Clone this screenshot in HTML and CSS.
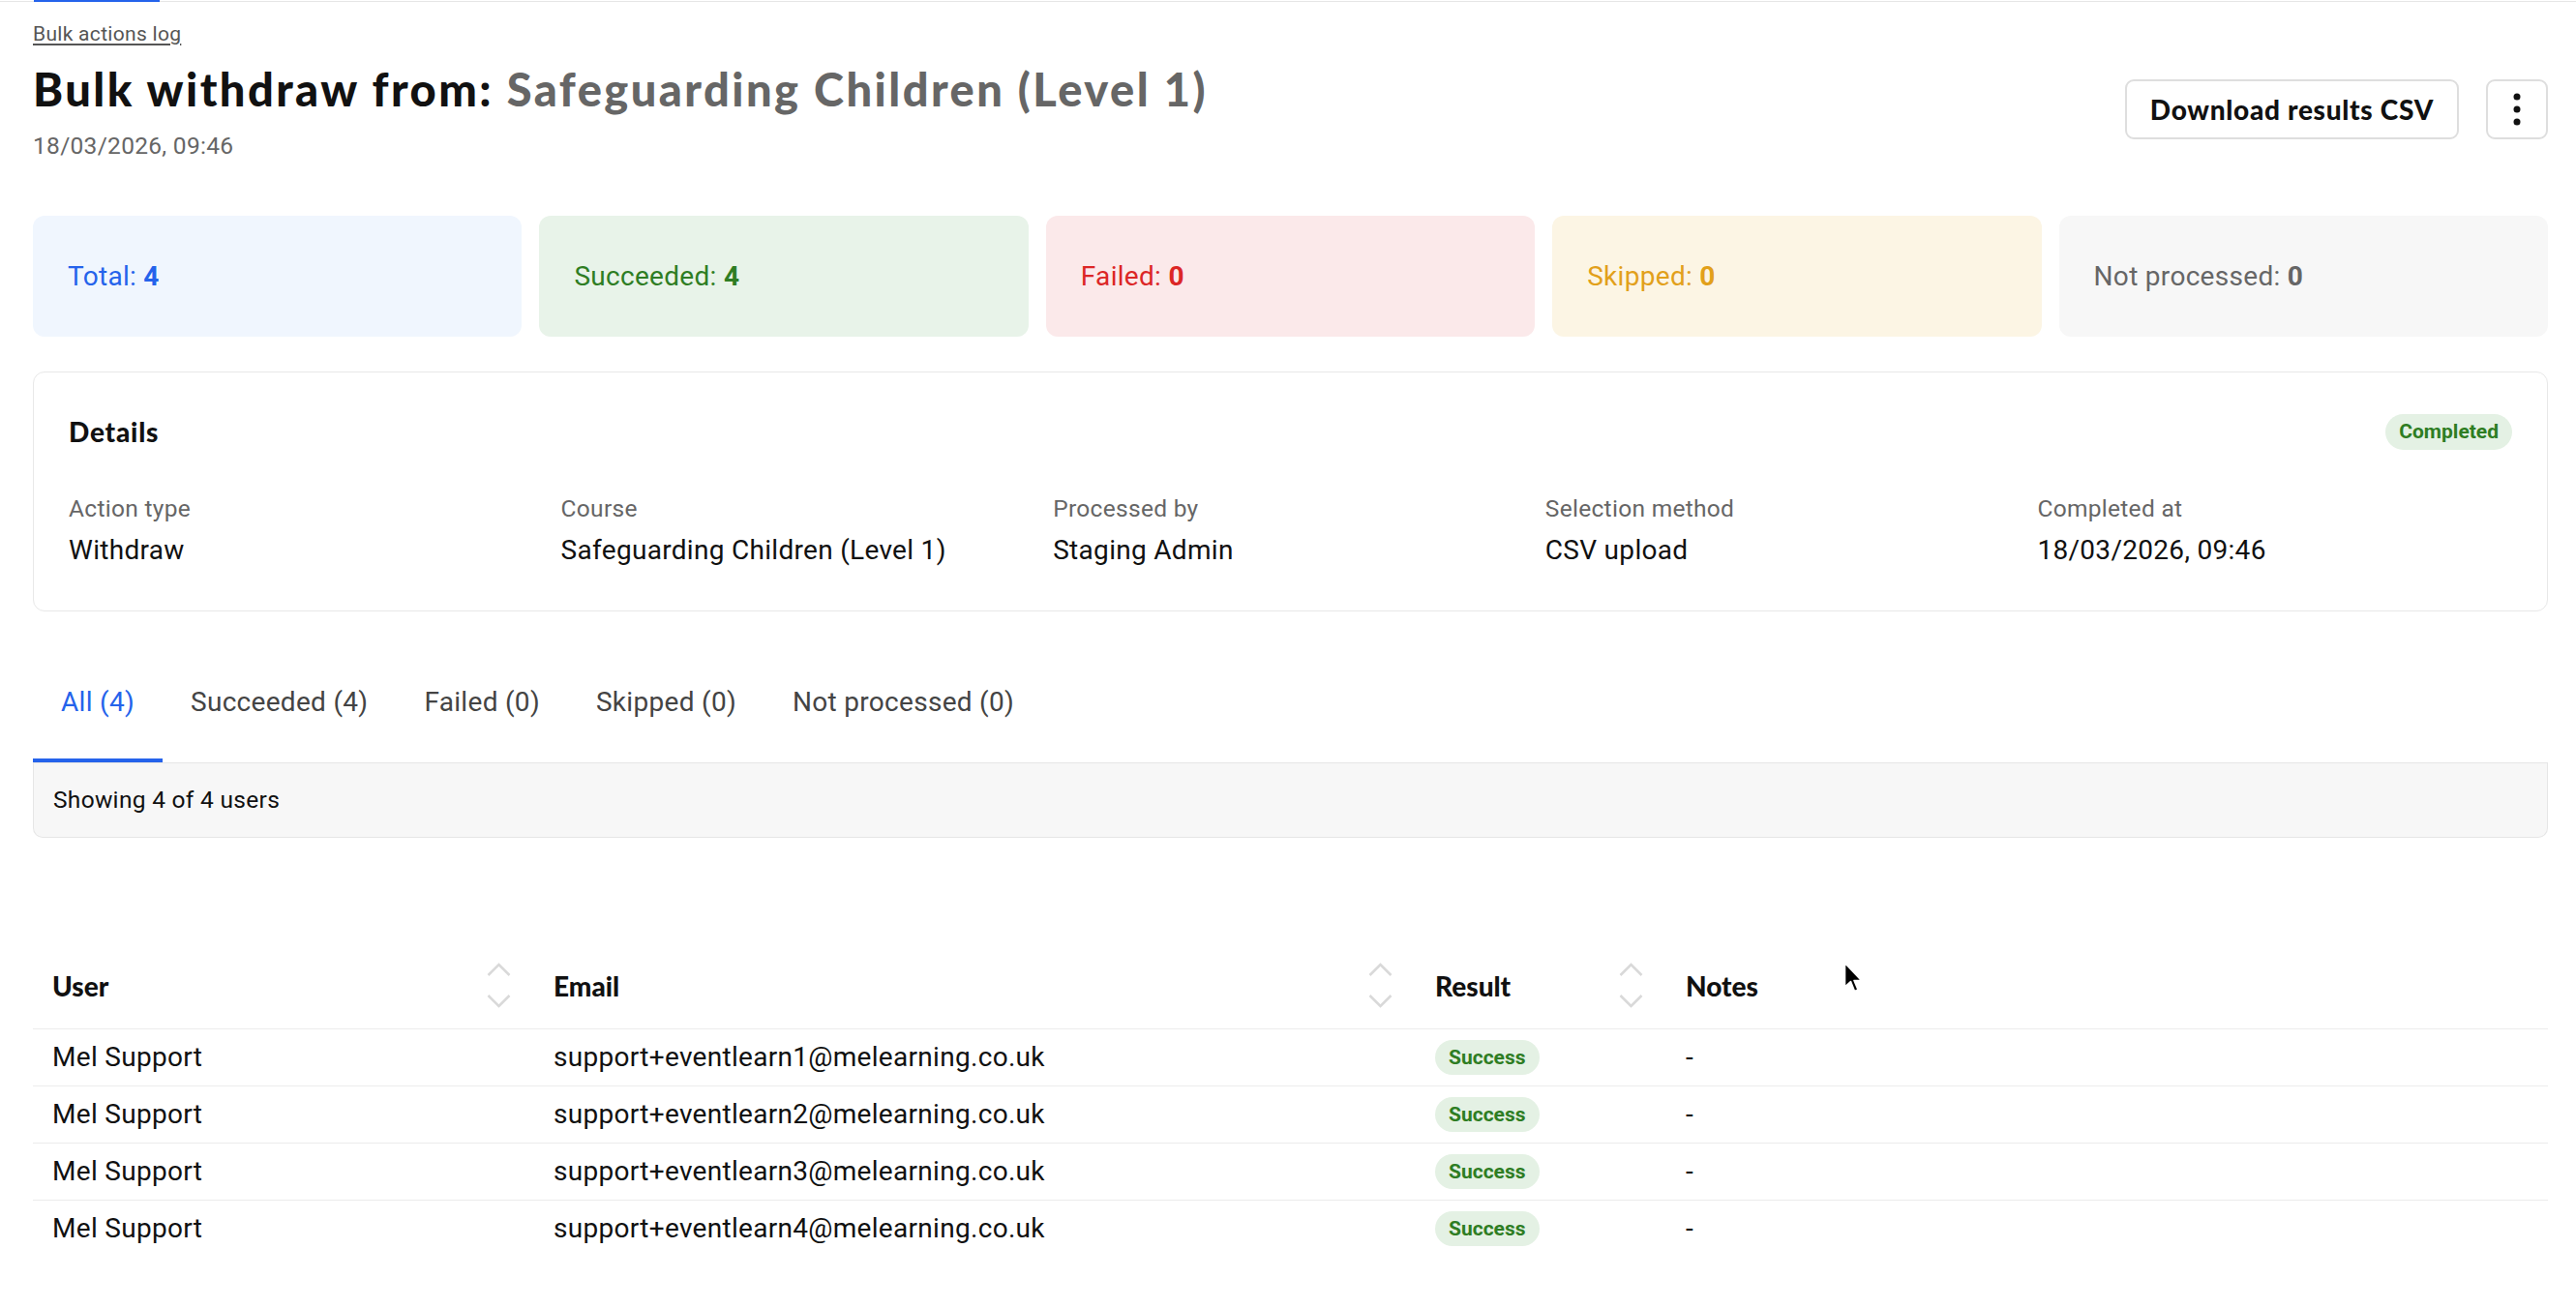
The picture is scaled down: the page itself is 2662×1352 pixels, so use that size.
FILE: index.html
```html
<!DOCTYPE html>
<html lang="en">
<head>
    <meta charset="UTF-8">
    <meta name="viewport" content="width=device-width, initial-scale=1.0">
    <title>Bulk withdraw - Safeguarding Children (Level 1)</title>
    <link rel="stylesheet" href="styles.css">
</head>
<body>
    <div class="topnav"><span class="topnav-active"></span></div>

    <main class="page">
        <header class="page-header">
            <div class="title-block">
                <a class="crumb" href="#">Bulk actions log</a>
                <h1 class="title">Bulk withdraw from: <span class="title-course">Safeguarding Children (Level 1)</span></h1>
                <div class="subtitle">18/03/2026, 09:46</div>
            </div>
            <div class="header-actions">
                <button class="btn">Download results CSV</button>
                <button class="btn btn-icon" aria-label="More actions">
                    <svg width="8" height="34" viewBox="0 0 8 34">
                        <circle cx="4" cy="4" r="3.5" fill="#111"/>
                        <circle cx="4" cy="17" r="3.5" fill="#111"/>
                        <circle cx="4" cy="30" r="3.5" fill="#111"/>
                    </svg>
                </button>
            </div>
        </header>

        <section class="stats">
            <div class="stat stat-total"><span>Total: <b>4</b></span></div>
            <div class="stat stat-success"><span>Succeeded: <b>4</b></span></div>
            <div class="stat stat-failed"><span>Failed: <b>0</b></span></div>
            <div class="stat stat-skipped"><span>Skipped: <b>0</b></span></div>
            <div class="stat stat-pending"><span>Not processed: <b>0</b></span></div>
        </section>

        <section class="card details">
            <div class="details-head">
                <h2>Details</h2>
                <span class="tag">Completed</span>
            </div>
            <dl class="details-grid">
                <div><dt>Action type</dt><dd>Withdraw</dd></div>
                <div><dt>Course</dt><dd>Safeguarding Children (Level 1)</dd></div>
                <div><dt>Processed by</dt><dd>Staging Admin</dd></div>
                <div><dt>Selection method</dt><dd>CSV upload</dd></div>
                <div><dt>Completed at</dt><dd>18/03/2026, 09:46</dd></div>
            </dl>
        </section>

        <nav class="tabs">
            <a class="tab active" href="#">All (4)</a>
            <a class="tab" href="#">Succeeded (4)</a>
            <a class="tab" href="#">Failed (0)</a>
            <a class="tab" href="#">Skipped (0)</a>
            <a class="tab" href="#">Not processed (0)</a>
        </nav>
        <div class="summary">Showing 4 of 4 users</div>

        <table class="results">
            <colgroup>
                <col class="col-user">
                <col class="col-email">
                <col class="col-result">
                <col>
            </colgroup>
            <thead>
                <tr>
                    <th><div class="th-inner">User<svg class="sorter" width="25" height="47" viewBox="0 0 25 47"><path d="M1.5 13 L12.5 2 L23.5 13 M1.5 34 L12.5 45 L23.5 34"/></svg></div></th>
                    <th><div class="th-inner">Email<svg class="sorter" width="25" height="47" viewBox="0 0 25 47"><path d="M1.5 13 L12.5 2 L23.5 13 M1.5 34 L12.5 45 L23.5 34"/></svg></div></th>
                    <th><div class="th-inner">Result<svg class="sorter" width="25" height="47" viewBox="0 0 25 47"><path d="M1.5 13 L12.5 2 L23.5 13 M1.5 34 L12.5 45 L23.5 34"/></svg></div></th>
                    <th><div class="th-inner">Notes</div></th>
                </tr>
            </thead>
            <tbody>
                <tr>
                    <td>Mel Support</td>
                    <td>support+eventlearn1@melearning.co.uk</td>
                    <td><span class="tag tag-sm">Success</span></td>
                    <td>-</td>
                </tr>
                <tr>
                    <td>Mel Support</td>
                    <td>support+eventlearn2@melearning.co.uk</td>
                    <td><span class="tag tag-sm">Success</span></td>
                    <td>-</td>
                </tr>
                <tr>
                    <td>Mel Support</td>
                    <td>support+eventlearn3@melearning.co.uk</td>
                    <td><span class="tag tag-sm">Success</span></td>
                    <td>-</td>
                </tr>
                <tr>
                    <td>Mel Support</td>
                    <td>support+eventlearn4@melearning.co.uk</td>
                    <td><span class="tag tag-sm">Success</span></td>
                    <td>-</td>
                </tr>
            </tbody>
        </table>
    </main>

    <!-- mouse pointer as captured -->
    <svg class="cursor" width="20" height="34" viewBox="0 0 20 34">
        <path d="M1.5 1.5 L1.5 26 L7.5 20.5 L11.5 30.5 L15 29 L11 19.5 L18.5 19.5 Z" fill="#000" stroke="#fff" stroke-width="1.6" stroke-linejoin="round"/>
    </svg>
</body>
</html>
```

FILE: styles.css
```css
body {
    margin: 0;
    font-family: Roboto, "Liberation Sans", Arial, sans-serif;
    font-size: 28px;
    letter-spacing: 0.3px;
    color: #111;
    background-color: #fff;
    position: relative;
}
.topnav {
    height: 1px;
    border-bottom: 1px solid #e6e6e6;
}
.topnav-active {
    display: block;
    width: 130px;
    height: 2px;
    margin-left: 35px;
    background-color: #2563eb;
}
.page {
    padding: 21px 29px 60px 34px;
}

/* header */
.page-header {
    display: flex;
    justify-content: space-between;
    align-items: flex-start;
}
.crumb {
    display: block;
    font-size: 21px;
    line-height: 24px;
    color: #555;
    text-decoration: underline;
    text-underline-offset: 3px;
}
.title {
    margin: 17px 0 0;
    font-family: Lato, "Noto Sans", sans-serif;
    font-weight: 900;
    font-size: 47px;
    line-height: 56px;
    letter-spacing: 2.45px;
    color: #111;
}
.title-course {
    color: #666;
}
.subtitle {
    margin-top: 17px;
    font-size: 24.5px;
    line-height: 28px;
    color: #666;
}
.header-actions {
    display: flex;
    gap: 28px;
    margin-top: 59px;
}
.btn {
    height: 62px;
    padding: 0 24px;
    background-color: #fff;
    border: 2px solid #dedede;
    border-radius: 9px;
    font-family: Lato, "Noto Sans", sans-serif;
    font-weight: 900;
    font-size: 28px;
    letter-spacing: 0.7px;
    color: #111;
    cursor: pointer;
}
.btn-icon {
    width: 64px;
    padding: 0;
    display: flex;
    align-items: center;
    justify-content: center;
}

/* stat cards */
.stats {
    display: grid;
    grid-template-columns: repeat(5, 1fr);
    gap: 18px;
    margin-top: 58px;
}
.stat {
    height: 125px;
    display: flex;
    align-items: center;
    padding: 0 36px;
    border-radius: 12px;
    font-size: 28px;
}
.stat-total { background-color: #f0f6fe; color: #2563eb; }
.stat-success { background-color: #e8f3e9; color: #2e7d23; }
.stat-failed { background-color: #fbe9ea; color: #dc2626; }
.stat-skipped { background-color: #fcf5e4; color: #e2a01a; }
.stat-pending { background-color: #f7f7f7; color: #666; }

/* details */
.card {
    border: 1px solid #e8e8e8;
    border-radius: 12px;
    background-color: #fff;
}
.details {
    margin-top: 36px;
    padding: 42px 36px 45px;
}
.details-head {
    display: flex;
    justify-content: space-between;
    align-items: center;
    height: 38px;
}
.details-head h2 {
    margin: 0;
    font-family: Lato, "Noto Sans", sans-serif;
    font-weight: 900;
    font-size: 28px;
    line-height: 38px;
    letter-spacing: 0.8px;
}
.tag {
    display: inline-block;
    height: 37px;
    line-height: 37px;
    padding: 0 14px;
    border-radius: 19px;
    background-color: #e4f1e4;
    color: #2e7d23;
    font-size: 21px;
    font-weight: 700;
    letter-spacing: 0;
}
.tag-sm {
    height: 36px;
    line-height: 36px;
    vertical-align: top;
}
.details-grid {
    display: grid;
    grid-template-columns: repeat(5, 1fr);
    gap: 18px;
    margin: 47px 0 0;
}
.details-grid dt {
    font-size: 24.5px;
    line-height: 28px;
    color: #666;
}
.details-grid dd {
    margin: 12px 0 0;
    font-size: 28px;
    line-height: 34px;
}

/* tabs */
.tabs {
    display: flex;
    margin-top: 32px;
    border-bottom: 1px solid #e6e6e6;
}
.tab {
    padding: 45px 29px 41px;
    line-height: 34px;
    color: #444;
    text-decoration: none;
    border-bottom: 4px solid transparent;
}
.tab.active {
    color: #2563eb;
    border-bottom-color: #2563eb;
}
.summary {
    padding: 24px 20px;
    font-size: 24.5px;
    line-height: 28px;
    background-color: #f7f7f7;
    border: 1px solid #e6e6e6;
    border-top: none;
    border-radius: 0 0 10px 10px;
}

/* results table */
.results {
    width: 100%;
    margin-top: 108px;
    border-collapse: collapse;
    table-layout: fixed;
}
.col-user { width: 518px; }
.col-email { width: 911px; }
.col-result { width: 259px; }
.results th {
    padding: 21px 20px;
    text-align: left;
    border-bottom: 1px solid #ececec;
}
.th-inner {
    display: flex;
    align-items: center;
    justify-content: space-between;
    height: 47px;
    font-family: Lato, "Noto Sans", sans-serif;
    font-weight: 900;
    font-size: 28px;
    line-height: 38px;
    letter-spacing: 0;
}
.sorter {
    margin-right: 4px;
    fill: none;
    stroke: #d9d9d9;
    stroke-width: 2.5;
}
.results td {
    padding: 11px 20px;
    line-height: 36px;
    border-bottom: 1px solid #ececec;
    white-space: nowrap;
}
.results tbody tr:last-child td {
    border-bottom: none;
}

.cursor {
    position: absolute;
    left: 1905px;
    top: 994px;
}
```
